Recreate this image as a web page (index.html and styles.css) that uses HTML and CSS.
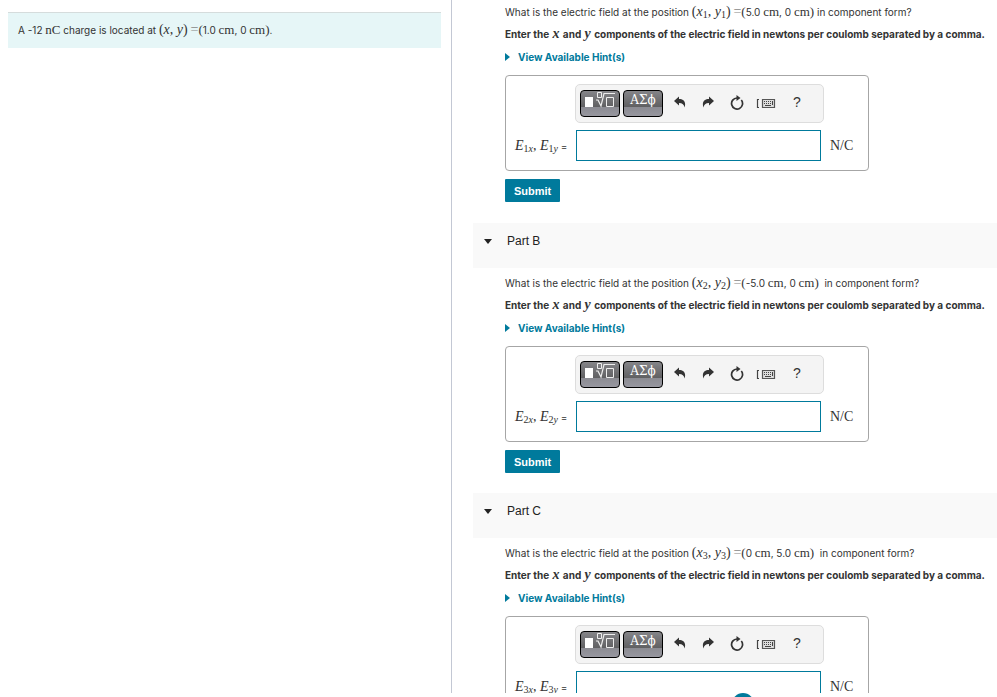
FILE: index.html
```html
<!DOCTYPE html>
<html lang="en">
<head>
    <meta charset="UTF-8">
    <meta name="viewport" content="width=device-width, initial-scale=1.0">
    <title>Electric Field of a Point Charge</title>
    <link rel="stylesheet" href="styles.css">
</head>
<body>
    <svg class="sprite" aria-hidden="true">
        <symbol id="icon-template" viewBox="0 0 32 18">
            <path d="M1 6h8v10H1z" fill="#fff"/>
            <path d="M13.500 1.500h4v5h-4zM22.500 6.500h7v9h-7z" fill="none" stroke="#eee"/>
            <path d="M12 9h2l3 6 3-12.500h11" fill="none" stroke="#eee" stroke-width="1.200"/>
        </symbol>
        <symbol id="icon-undo" viewBox="0 0 12 12">
            <path d="M0 5L5 0.500v2.500c4.500 0 7.500 3 5.500 8.500C10 8.500 8.500 7 5 7v2.500z" fill="#333"/>
        </symbol>
        <symbol id="icon-reset" viewBox="0 0 14 15">
            <path d="M11.300 5A5.500 5.500 0 1 1 7 3" fill="none" stroke="#333" stroke-width="1.700"/>
            <path d="M6.500 0l4 3-4 3z" fill="#333"/>
        </symbol>
        <symbol id="icon-keyboard" viewBox="0 0 20 11">
            <path d="M3 1.500H1.500v8H3" fill="none" stroke="#444" stroke-width="1.200"/>
            <path d="M6.500 1.500h12v8h-12z" fill="#ddd" stroke="#555" stroke-width="1.200"/>
            <path d="M8 3.500h9M8 5.500h9" stroke="#444" stroke-dasharray="1 1"/>
            <path d="M9 7.500h6M16.500 3v4" stroke="#444"/>
        </symbol>
    </svg>

    <div class="page">
        <aside class="sidebar">
            <p class="problem">A -12 <span class="math">nC</span> charge is located at <span class="math pair">(<i>x</i>, <i>y</i>)</span> <span class="math eq">=</span><span class="math">(</span>1.0 <span class="math">cm</span>, 0 <span class="math">cm)</span>.</p>
        </aside>

        <main class="parts">
            <section class="part">
                <div class="part-body first">
                    <p class="question">What is the electric field at the position <span class="math pair">(<i>x</i><sub>1</sub>, <i>y</i><sub>1</sub>)</span> <span class="math eq">=</span><span class="math">(</span>5.0 <span class="math">cm</span>, 0 <span class="math">cm)</span> in component form?</p>
                    <p class="instruction">Enter the <i class="math">x</i> and <i class="math">y</i> components of the electric field in newtons per coulomb separated by a comma.</p>
                    <a class="hints" href="#">View Available Hint(s)</a>
                    <div class="answer-box">
                        <div class="toolbar">
                            <button class="palette" type="button" aria-label="Templates"><svg width="32" height="18"><use href="#icon-template"/></svg></button>
                            <button class="palette" type="button" aria-label="Symbols">ΑΣϕ</button>
                            <button class="tool" type="button" aria-label="Undo"><svg width="12" height="12"><use href="#icon-undo"/></svg></button>
                            <button class="tool redo" type="button" aria-label="Redo"><svg width="12" height="12"><use href="#icon-undo"/></svg></button>
                            <button class="tool" type="button" aria-label="Reset"><svg width="14" height="15"><use href="#icon-reset"/></svg></button>
                            <button class="tool keyboard" type="button" aria-label="Keyboard shortcuts"><svg width="20" height="11"><use href="#icon-keyboard"/></svg></button>
                            <button class="tool help" type="button" aria-label="Help">?</button>
                        </div>
                        <label for="answerA"><span class="math"><i>E</i><sub>1<i>x</i></sub>, <i>E</i><sub>1<i>y</i></sub></span> =</label>
                        <input id="answerA" type="text">
                        <span class="unit">N/C</span>
                    </div>
                    <button class="submit" type="button">Submit</button>
                </div>
            </section>

            <section class="part">
                <h2 class="part-header">Part B</h2>
                <div class="part-body">
                    <p class="question">What is the electric field at the position <span class="math pair">(<i>x</i><sub>2</sub>, <i>y</i><sub>2</sub>)</span> <span class="math eq">=</span><span class="math">(</span>-5.0 <span class="math">cm</span>, 0 <span class="math">cm)</span>&nbsp; in component form?</p>
                    <p class="instruction">Enter the <i class="math">x</i> and <i class="math">y</i> components of the electric field in newtons per coulomb separated by a comma.</p>
                    <a class="hints" href="#">View Available Hint(s)</a>
                    <div class="answer-box">
                        <div class="toolbar">
                            <button class="palette" type="button" aria-label="Templates"><svg width="32" height="18"><use href="#icon-template"/></svg></button>
                            <button class="palette" type="button" aria-label="Symbols">ΑΣϕ</button>
                            <button class="tool" type="button" aria-label="Undo"><svg width="12" height="12"><use href="#icon-undo"/></svg></button>
                            <button class="tool redo" type="button" aria-label="Redo"><svg width="12" height="12"><use href="#icon-undo"/></svg></button>
                            <button class="tool" type="button" aria-label="Reset"><svg width="14" height="15"><use href="#icon-reset"/></svg></button>
                            <button class="tool keyboard" type="button" aria-label="Keyboard shortcuts"><svg width="20" height="11"><use href="#icon-keyboard"/></svg></button>
                            <button class="tool help" type="button" aria-label="Help">?</button>
                        </div>
                        <label for="answerB"><span class="math"><i>E</i><sub>2<i>x</i></sub>, <i>E</i><sub>2<i>y</i></sub></span> =</label>
                        <input id="answerB" type="text">
                        <span class="unit">N/C</span>
                    </div>
                    <button class="submit" type="button">Submit</button>
                </div>
            </section>

            <section class="part">
                <h2 class="part-header">Part C</h2>
                <div class="part-body">
                    <p class="question">What is the electric field at the position <span class="math pair">(<i>x</i><sub>3</sub>, <i>y</i><sub>3</sub>)</span> <span class="math eq">=</span><span class="math">(</span>0 <span class="math">cm</span>, 5.0 <span class="math">cm)</span>&nbsp; in component form?</p>
                    <p class="instruction">Enter the <i class="math">x</i> and <i class="math">y</i> components of the electric field in newtons per coulomb separated by a comma.</p>
                    <a class="hints" href="#">View Available Hint(s)</a>
                    <div class="answer-box">
                        <div class="toolbar">
                            <button class="palette" type="button" aria-label="Templates"><svg width="32" height="18"><use href="#icon-template"/></svg></button>
                            <button class="palette" type="button" aria-label="Symbols">ΑΣϕ</button>
                            <button class="tool" type="button" aria-label="Undo"><svg width="12" height="12"><use href="#icon-undo"/></svg></button>
                            <button class="tool redo" type="button" aria-label="Redo"><svg width="12" height="12"><use href="#icon-undo"/></svg></button>
                            <button class="tool" type="button" aria-label="Reset"><svg width="14" height="15"><use href="#icon-reset"/></svg></button>
                            <button class="tool keyboard" type="button" aria-label="Keyboard shortcuts"><svg width="20" height="11"><use href="#icon-keyboard"/></svg></button>
                            <button class="tool help" type="button" aria-label="Help">?</button>
                        </div>
                        <label for="answerC"><span class="math"><i>E</i><sub>3<i>x</i></sub>, <i>E</i><sub>3<i>y</i></sub></span> =</label>
                        <input id="answerC" type="text">
                        <span class="unit">N/C</span>
                    </div>
                </div>
            </section>
        </main>
    </div>
    <div class="badge"></div>
</body>
</html>
```

FILE: styles.css
```css
* {
    box-sizing: border-box;
}
body {
    margin: 0;
    overflow: hidden;
    background-color: #fff;
    color: #333;
    font-family: Inter, Arial, sans-serif;
    font-size: 10px;
    line-height: 18px;
}
p, h2 {
    margin: 0;
}
.sprite {
    display: none;
}
.page {
    display: grid;
    grid-template-columns: minmax(0, 452fr) minmax(0, 545fr);
    height: calc(100vh - 4px);
    overflow: hidden;
}
.sidebar {
    padding: 12px 10px 0 8px;
    border-right: 1px solid #c3c8d4;
}
.problem {
    padding: 8px 10px 9px;
    border-top: 1px solid #d5dcdc;
    background-color: #e6f6f7;
}
.parts {
    padding-left: 21px;
}
.part-header {
    display: flex;
    align-items: center;
    gap: 15px;
    height: 45px;
    padding: 0 11px 9px;
    background-color: #f9f9f9;
    color: #222;
    font-family: Arial, "Liberation Sans", sans-serif;
    font-size: 12px;
    font-weight: normal;
}
.part-header::before {
    content: "";
    border: 4px solid transparent;
    border-top: 5px solid #222;
    border-bottom: 0;
}
.part-body {
    padding: 6px 0 20px 32px;
}
.part-body.first {
    padding-top: 3px;
    padding-bottom: 21px;
}
.question, .instruction, .problem {
    white-space: nowrap;
}
.question, .instruction {
    height: 18px;
}
.instruction {
    margin-top: 4px;
    font-weight: bold;
}
.math {
    font-family: "Liberation Serif", serif;
    font-size: 13px;
    line-height: 1;
}
.instruction .math {
    margin: 0 1px;
    font-size: 14px;
}
.pair {
    font-size: 14px;
}
.eq {
    color: #888;
    font-size: 14px;
}
.math sub {
    font-size: 10px;
    line-height: 0;
    vertical-align: -2px;
}
.hints {
    display: flex;
    align-items: center;
    gap: 8px;
    margin-top: 5px;
    color: #007a9c;
    font-weight: bold;
    text-decoration: none;
}
.hints::before {
    content: "";
    border: 4px solid transparent;
    border-left: 5px solid #007a9c;
    border-right: 0;
}
.answer-box {
    display: grid;
    grid-template-columns: 61px 245px 1fr;
    align-items: center;
    align-content: start;
    row-gap: 7px;
    width: 364px;
    height: 96px;
    margin-top: 9px;
    padding: 8px 9px;
    border: 1px solid #a6a6a6;
    border-radius: 4px;
}
.answer-box label .math {
    font-size: 14px;
}
.toolbar {
    grid-column: 1 / -1;
    display: flex;
    align-items: flex-start;
    width: 249px;
    height: 39px;
    margin-left: 60px;
    padding: 5px 4px;
    border: 1px solid #ddd;
    border-radius: 5px;
    background-color: #f4f4f4;
}
.palette {
    width: 40px;
    height: 27px;
    margin-right: 3px;
    padding: 0 3px 7px;
    border: 1px solid #000;
    border-radius: 4px;
    background: linear-gradient(#858589, #616163 62%, #8b8b92 64%, #97979f);
    color: #fff;
    font-family: "DejaVu Serif", serif;
    font-size: 12px;
    line-height: 18px;
}
.palette svg {
    display: block;
}
.tool {
    display: flex;
    align-items: center;
    justify-content: center;
    width: 29px;
    height: 24px;
    padding: 0;
    border: 0;
    background: none;
    color: #333;
    font-family: Arial, "Liberation Sans", sans-serif;
    font-size: 14px;
}
.palette + .tool {
    width: 27px;
}
.redo svg {
    transform: scaleX(-1);
}
.keyboard {
    padding-top: 3px;
}
.help {
    width: 34px;
}
.answer-box input {
    height: 31px;
    border: 1px solid #007a9c;
    border-radius: 0;
    background-color: #fff;
}
.unit {
    padding-left: 9px;
    font-family: "Liberation Serif", serif;
    font-size: 14px;
}
.submit {
    display: block;
    height: 23px;
    margin-top: 8px;
    padding: 0 9px;
    border: 0;
    border-radius: 1px;
    background-color: #007a9c;
    color: #fff;
    font-family: Arial, "Liberation Sans", sans-serif;
    font-size: 11px;
    font-weight: bold;
}
/* round button peeking in from the bottom edge */
.badge {
    position: absolute;
    left: 732px;
    top: calc(100% - 4px);
    width: 22px;
    height: 22px;
    border-radius: 50%;
    background-color: #007a9c;
}
```
